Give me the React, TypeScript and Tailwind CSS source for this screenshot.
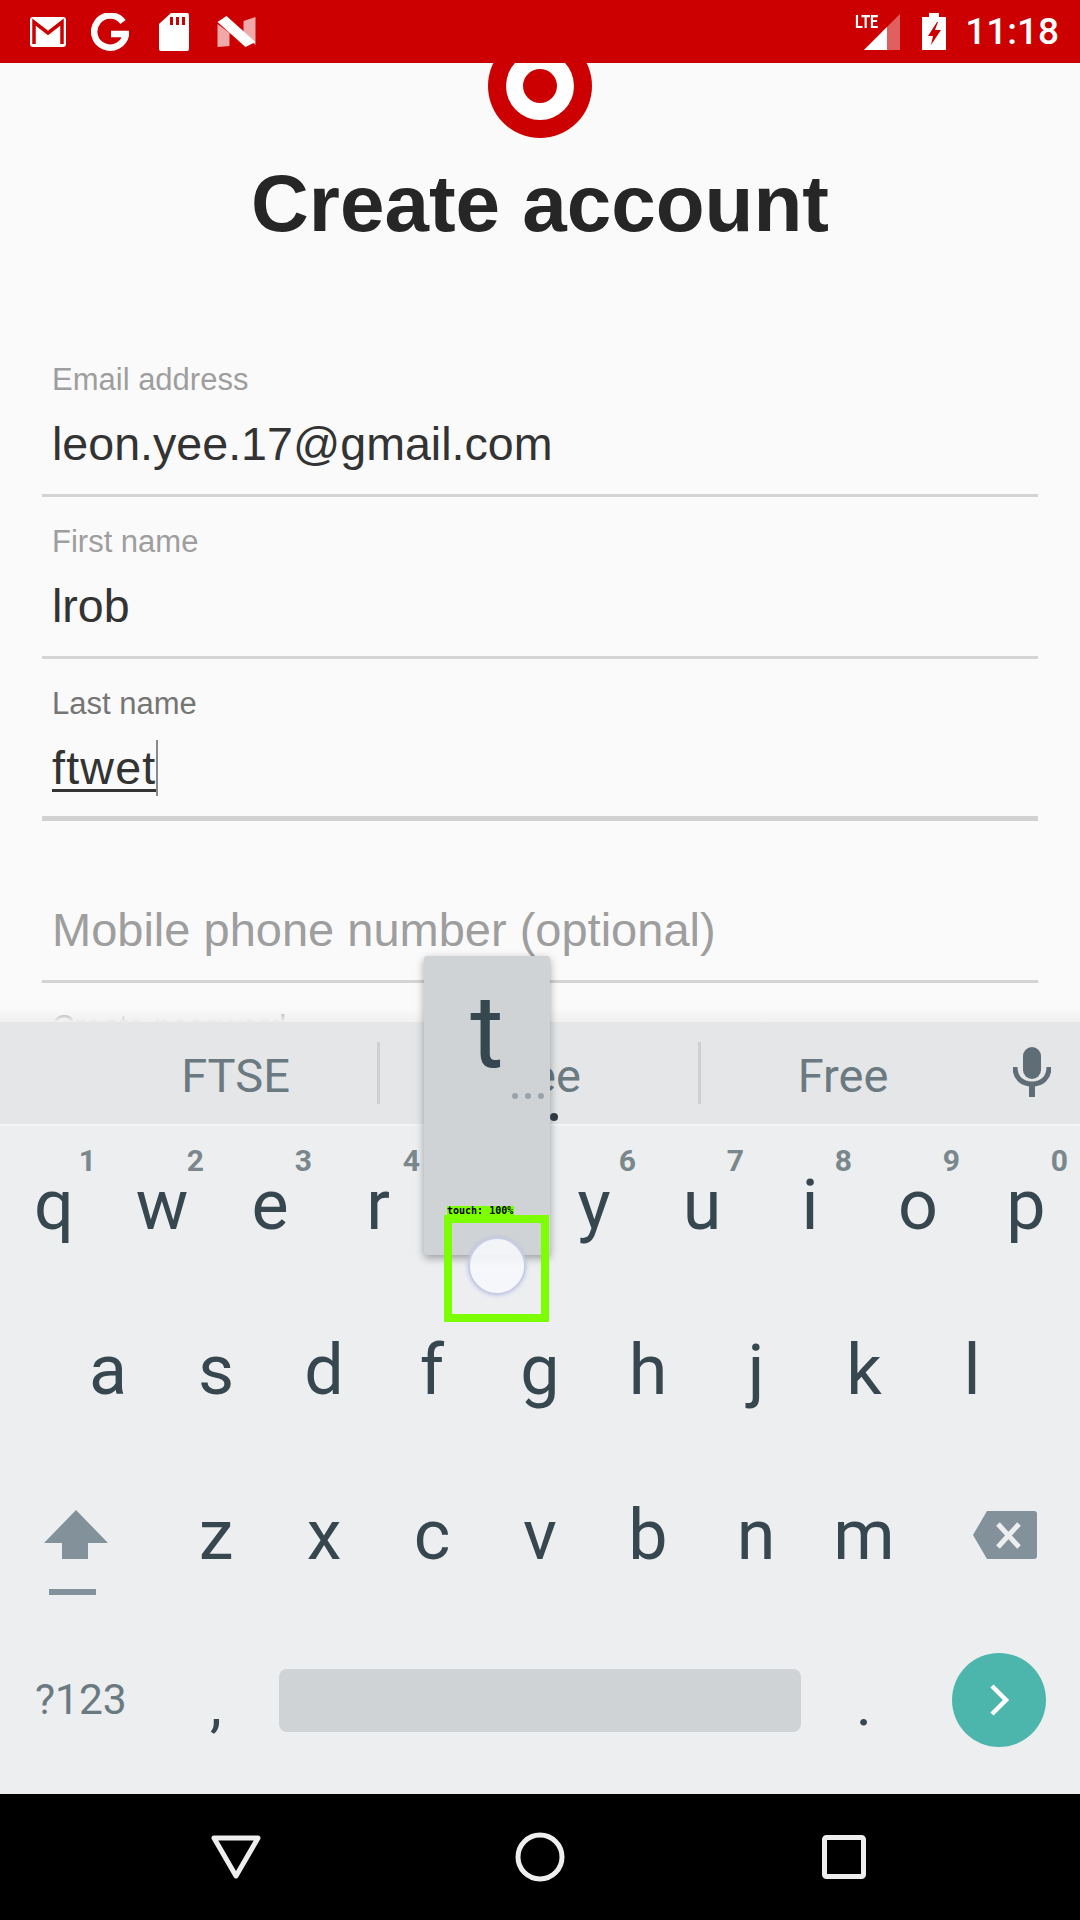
import React from "react";

const row1: [string, string | null][] = [["q","1"],["w","2"],["e","3"],["r","4"],["t",null],["y","6"],["u","7"],["i","8"],["o","9"],["p","0"]];
const row2 = ["a","s","d","f","g","h","j","k","l"];
const row3 = ["z","x","c","v","b","n","m"];

function Field({ label, value, dark, thick, underlined, cursor }: { label: string; value: string; dark?: boolean; thick?: boolean; underlined?: boolean; cursor?: boolean }) {
  return (
    <div className={`mx-[42px] h-[162px] flex flex-col ${thick ? "border-b-[5px] border-[#d2d2d2]" : "border-b-[3px] border-[#d4d4d4]"}`}>
      <div className={`mt-[25px] ml-[10px] text-[31px] leading-[40px] ${dark ? "text-[#757575]" : "text-[#9e9e9e]"}`}>{label}</div>
      <div className="ml-[10px] mt-[14px] h-[60px] text-[46.6px] leading-[60px] text-[#333333] flex items-center">
        <span className={underlined ? "underline underline-offset-[5px] decoration-[3px] tracking-[1.2px]" : ""}>{value}</span>
        {cursor && <span className="w-[2px] h-[56px] bg-[#8a8a8a]" />}
      </div>
    </div>
  );
}

export default function App() {
  return (
    <div className="w-[1080px] h-[1920px] flex flex-col relative overflow-hidden bg-[#fafafa] font-['Roboto',sans-serif]">
      <div className="h-[63px] shrink-0 bg-[#cc0000] flex items-center justify-between pl-[29px] pr-[21px] relative z-10">
        <div className="flex items-center">
          <svg width="38" height="32" viewBox="0 0 38 32">
            <rect x="1" y="1" width="36" height="30" rx="3" fill="#fff" />
            <path d="M5 28V6l14 11L33 6v22" fill="none" stroke="#cc0000" strokeWidth="3.5" />
          </svg>
          <svg width="38" height="38" viewBox="0 0 38 38" className="ml-[24px]">
            <path d="M32 9a16 16 0 1 0 3 12H20" fill="none" stroke="#fff" strokeWidth="6.5" />
          </svg>
          <svg width="30" height="38" viewBox="0 0 30 38" className="ml-[30px]">
            <path d="M12 0h16a2 2 0 0 1 2 2v34a2 2 0 0 1-2 2H2a2 2 0 0 1-2-2V11z" fill="#fff" />
            <path d="M11 4h3v8h-3zM17 4h3v8h-3zM23 4h3v8h-3z" fill="#cc0000" />
          </svg>
          <svg width="39" height="32" viewBox="0 0 38 32" className="ml-[28px]">
            <path d="M0 8l12 9v13L0 31z" fill="#f0a8a8" />
            <path d="M26 5l12-4v28L26 19z" fill="#f0a8a8" />
            <path d="M0 6l9-6 29 26-10 5z" fill="#fff" />
          </svg>
        </div>
        <div className="flex items-center">
          <div className="relative w-[45px] h-[38px] mr-[22px]">
            <svg width="36" height="36" viewBox="0 0 36 36" className="absolute right-0 top-[1px]">
              <path d="M0 36L36 0v36z" fill="#e06060" />
              <path d="M0 36L23 13v23z" fill="#fff" />
            </svg>
            <span className="absolute left-0 top-[-1px] text-[18px] leading-[20px] font-bold text-white scale-x-[0.8] origin-left">LTE</span>
          </div>
          <svg width="24" height="37" viewBox="0 0 24 37" className="mr-[19px]">
            <path d="M7 0h10v4h7v33H0V4h7z" fill="#fff" />
            <path d="M15 9L6 23h5l-2 9 10-15h-6l3-8z" fill="#cc0000" />
          </svg>
          <span className="text-[37px] leading-[40px] text-white font-medium">11:18</span>
        </div>
      </div>

      <main className="flex-1 min-h-0 overflow-hidden relative">
        <div className="flex justify-center -mt-[29px]">
          <svg width="104" height="104" viewBox="0 0 104 104">
            <circle cx="52" cy="52" r="52" fill="#cc0000" />
            <circle cx="52" cy="52" r="34" fill="#fff" />
            <circle cx="52" cy="52" r="17" fill="#cc0000" />
          </svg>
        </div>
        <h1 className="mt-[16px] text-center text-[80px] leading-[100px] font-bold text-[#262626] font-['Liberation_Sans',sans-serif]">Create account</h1>
        <div className="mt-[81px] font-['Liberation_Sans',sans-serif]">
          <Field label="Email address" value="leon.yee.17@gmail.com" />
          <Field label="First name" value="lrob" />
          <Field label="Last name" value="ftwet" dark thick underlined cursor />
          <div className="mx-[42px] h-[162px] border-b-[3px] border-[#d4d4d4] flex items-end pb-[20px]">
            <span className="ml-[10px] text-[47px] leading-[60px] text-[#9e9e9e]">Mobile phone number (optional)</span>
          </div>
          <div className="ml-[52px] mt-[24px] text-[31px] leading-[40px] text-[#9e9e9e]">Create password</div>
        </div>
      </main>

      <section className="h-[772px] shrink-0 bg-[#eceef0] flex flex-col relative">
        <div className="absolute left-0 right-0 -top-[14px] h-[14px] bg-linear-to-b from-[#fafafa00] to-[#f0f0f0]" />
        <div className="h-[104px] shrink-0 bg-[#e4e6e8] flex items-center pl-[94px] pr-[95px] text-[#6b7a80] text-[47px] border-b-[2px] border-[#f2f3f4]">
          <div className="w-[286px] h-[62px] pt-[6px] flex items-center justify-center border-r-[3px] border-[#cdd1d4]">FTSE</div>
          <div className="w-[321px] h-[62px] pt-[6px] pr-[8px] flex items-center justify-center border-r-[3px] border-[#cdd1d4]">Tree</div>
          <div className="flex-1 h-[62px] pt-[6px] flex items-center justify-center">Free</div>
          <svg width="38" height="50" viewBox="0 0 38 50" className="absolute right-[29px] top-[25px]">
            <rect x="10" y="0" width="18" height="32" rx="9" fill="#5f6e76" />
            <path d="M2 20c0 11 7 17 17 17s17-6 17-17" fill="none" stroke="#5f6e76" strokeWidth="5" />
            <rect x="16" y="36" width="6" height="14" fill="#5f6e76" />
          </svg>
        </div>

        <div className="flex-1 flex flex-col text-[#37474f] text-[70px]">
          <div className="h-[163px] grid grid-cols-10">
            {row1.map(([k, n]) => (
              <div key={k} className="relative flex justify-center items-end pb-[44px]">
                <span className="leading-[80px]">{k}</span>
                {n && <span className="absolute right-[12px] top-[19px] text-[30px] leading-[32px] font-bold text-[#7a878c]">{n}</span>}
              </div>
            ))}
          </div>
          <div className="h-[165px] flex justify-center">
            {row2.map((k) => (
              <div key={k} className="w-[108px] flex justify-center items-end pb-[44px]">
                <span className="leading-[80px]">{k}</span>
              </div>
            ))}
          </div>
          <div className="h-[165px] flex items-end pb-[44px] relative">
            <div className="w-[162px]" />
            {row3.map((k) => (
              <div key={k} className="w-[108px] flex justify-center">
                <span className="leading-[80px]">{k}</span>
              </div>
            ))}
            <svg width="64" height="86" viewBox="0 0 64 86" className="absolute left-[44px] top-[56px]">
              <path d="M32 0l32 33H44v16H18V33H0z" fill="#83929a" />
              <rect x="5" y="79" width="47" height="6" fill="#83929a" />
            </svg>
            <svg width="64" height="48" viewBox="0 0 64 48" className="absolute left-[973px] top-[57px]">
              <path d="M14 0h47a3 3 0 0 1 3 3v42a3 3 0 0 1-3 3H14L0 24z" fill="#83929a" />
              <path d="M25 13l21 23M46 13L25 36" stroke="#eceef0" strokeWidth="5" fill="none" />
            </svg>
          </div>
          <div className="flex-1 flex items-center relative pb-[13px]">
            <div className="w-[162px] pl-[35px] text-[42.5px] text-[#6b7a80]">?123</div>
            <div className="w-[108px] flex justify-center text-[60px] leading-[60px] pt-[10px]">,</div>
            <div className="w-[522px] h-[63px] ml-[9px] rounded-[8px] bg-[#d0d3d6]" />
            <div className="w-[108px] ml-[9px] flex justify-center text-[60px] leading-[60px] pt-[10px]">.</div>
            <div className="w-[94px] h-[94px] ml-[34px] rounded-full bg-[#4db6ac] flex items-center justify-center">
              <svg width="22" height="32" viewBox="0 0 22 32"><path d="M4 2l14 14L4 30" fill="none" stroke="#fff" strokeWidth="4.5" /></svg>
            </div>
          </div>
        </div>
      </section>

      <nav className="h-[126px] shrink-0 bg-black flex items-center">
        <div className="w-[1080px] flex items-center">
          <svg width="50" height="44" viewBox="0 0 50 44" className="ml-[211px]">
            <path d="M3 3h44L25 41z" fill="none" stroke="#eee" strokeWidth="5" strokeLinejoin="round" />
          </svg>
          <svg width="50" height="50" viewBox="0 0 50 50" className="ml-[254px]">
            <circle cx="25" cy="25" r="22" fill="none" stroke="#eee" strokeWidth="5" />
          </svg>
          <svg width="44" height="44" viewBox="0 0 44 44" className="ml-[257px]">
            <rect x="2.5" y="2.5" width="39" height="39" rx="2" fill="none" stroke="#eee" strokeWidth="5" />
          </svg>
        </div>
      </nav>

      {/* key preview popup */}
      <div className="absolute left-[424px] top-[956px] w-[126px] h-[299px] rounded-[3px] bg-[#d0d3d6] shadow-[0_3px_8px_rgba(0,0,0,0.35)] flex justify-center">
        <span className="text-[102px] leading-[120px] mt-[16px] text-[#37474f]">t</span>
        <div className="absolute left-[88px] top-[137px] flex gap-[7px]">
          <span className="w-[6px] h-[6px] rounded-full bg-[#98a4aa]" />
          <span className="w-[6px] h-[6px] rounded-full bg-[#98a4aa]" />
          <span className="w-[6px] h-[6px] rounded-full bg-[#98a4aa]" />
        </div>
      </div>
      <span className="absolute left-[550px] top-[1113px] w-[8px] h-[8px] rounded-full bg-[#2f3b42]" />

      {/* touch overlay */}
      <div className="absolute left-[468px] top-[1237px] w-[58px] h-[58px] rounded-full bg-[#f6f7fb]/90 border-[2px] border-[#c8cce4] shadow-[0_0_4px_#b8bedc] blur-[0.5px]" />
      <div className="absolute left-[444px] top-[1215px] w-[105px] h-[107px] border-[8px] border-[#7cff00]" />
      <div className="absolute left-[447px] top-[1206px] w-[67px] h-[10px] bg-[#7cff00] text-[10px] leading-[10px] font-bold text-black whitespace-nowrap font-['DejaVu_Sans_Mono',monospace]">touch: 100%</div>
    </div>
  );
}
